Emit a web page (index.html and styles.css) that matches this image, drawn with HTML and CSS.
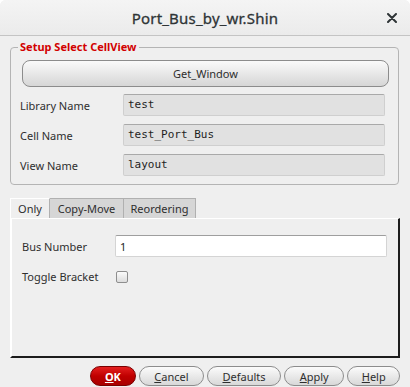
FILE: index.html
```html
<!DOCTYPE html>
<html lang="en">
<head>
  <meta charset="UTF-8" />
  <meta name="viewport" content="width=device-width, initial-scale=1.0" />
  <title>Port_Bus_by_wr.Shin</title>
  <link rel="stylesheet" href="styles.css">
</head>
<body>
  <div class="window">
    <header class="titlebar">
      <span class="title">Port_Bus_by_wr.Shin</span>
      <span class="close">
        <svg width="10" height="10" viewBox="0 0 10 10">
          <path d="M1 1 L9 9 M9 1 L1 9" stroke="#2e3436" stroke-width="2" stroke-linecap="round" />
        </svg>
      </span>
    </header>

    <div class="content">
      <fieldset class="group">
        <legend>Setup Select CellView</legend>
        <button class="wide-btn">Get_Window</button>
        <div class="form-grid">
          <label>Library Name</label>
          <div class="field">test</div>
          <label>Cell Name</label>
          <div class="field">test_Port_Bus</div>
          <label>View Name</label>
          <div class="field">layout</div>
        </div>
      </fieldset>

      <div class="tabs">
        <div class="tab active tab-only">Only</div>
        <div class="tab tab-copy">Copy-Move</div>
        <div class="tab tab-reorder">Reordering</div>
      </div>
      <div class="tab-panel">
        <div class="panel-row">
          <label>Bus Number</label>
          <input type="text" class="entry" value="1">
        </div>
        <div class="panel-row check-row">
          <label>Toggle Bracket</label>
          <span class="checkbox"></span>
        </div>
      </div>

      <div class="buttons">
        <button class="btn ok"><u>O</u>K</button>
        <button class="btn cancel"><u>C</u>ancel</button>
        <button class="btn defaults"><u>D</u>efaults</button>
        <button class="btn apply"><u>A</u>pply</button>
        <button class="btn help"><u>H</u>elp</button>
      </div>
    </div>
  </div>
</body>
</html>
```

FILE: styles.css
```css
html, body {
  margin: 0;
  padding: 0;
  background-color: #ffffff;
}

body {
  font-family: "Noto Sans", "Open Sans", sans-serif;
  font-size: 11px;
  color: #2e2e2e;
}

.window {
  width: 410px;
  height: 387px;
  background-color: #efefef;
  border-radius: 6px 6px 0 0;
  overflow: hidden;
}

.titlebar {
  height: 35px;
  border-bottom: 1px solid #c4c4c4;
  background: linear-gradient(#f4f4f4, #ebebeb);
  display: flex;
  align-items: center;
  justify-content: center;
  position: relative;
}

.title {
  font-size: 15px;
  color: #2e3436;
  letter-spacing: 0.2px;
  -webkit-text-stroke: 0.3px #2e3436;
}

.close {
  position: absolute;
  right: 13px;
  top: 13px;
  width: 10px;
  height: 10px;
  display: flex;
}

.content {
  padding: 0 10px 0 10px;
}

.group {
  margin: 4px 1px 0 0;
  padding: 6px 9px 8px 11px;
  border: 1px solid #b4b4b4;
  border-radius: 4px;
}

.group legend {
  color: #d20000;
  font-weight: bold;
  font-size: 11px;
  line-height: 14px;
  padding: 0 2px;
  margin-left: -4px;
}

.wide-btn {
  display: block;
  width: 367px;
  height: 27px;
  border: 1px solid #8c8c8c;
  border-radius: 8px;
  background: linear-gradient(#fafafa, #d6d6d6);
  font-family: inherit;
  font-size: 11px;
  color: #2e2e2e;
  padding: 0;
}

.form-grid {
  display: grid;
  grid-template-columns: 101px 262px;
  row-gap: 8px;
  margin-top: 7px;
  align-items: center;
}

.form-grid label {
  margin-left: -2px;
}

.field {
  height: 20px;
  background-color: #e1e1e1;
  border: 1px solid #cfcfcf;
  border-top-color: #a9a9a9;
  border-radius: 2px;
  font-family: "DejaVu Sans Mono", monospace;
  font-size: 11px;
  line-height: 20px;
  padding-left: 4px;
  color: #1e1e1e;
}

.tabs {
  display: flex;
  margin-top: 13px;
  height: 20px;
}

.tab {
  box-sizing: border-box;
  height: 20px;
  line-height: 19px;
  text-align: center;
  background-color: #d6d6d6;
  border-top: 1px solid #b0b0b0;
  border-right: 1px solid #b0b0b0;
}

.tab.active {
  background-color: #efefef;
  border-top: 1px solid #ffffff;
  border-left: 1px solid #ffffff;
  border-right: 1px solid #b0b0b0;
}

.tab-only { width: 40px; }
.tab-copy { width: 74px; }
.tab-reorder { width: 72px; }

.tab-panel {
  box-sizing: border-box;
  width: 390px;
  height: 140px;
  border-top: 1px solid #ffffff;
  border-left: 2px solid #ffffff;
  border-right: 2px solid #1c1c1c;
  border-bottom: 2px solid #1c1c1c;
  padding: 16px 0 0 10px;
}

.panel-row {
  display: flex;
  align-items: center;
}

.panel-row label {
  width: 93px;
}

.entry {
  box-sizing: border-box;
  width: 272px;
  height: 22px;
  border: 1px solid #d4d4d4;
  border-top-color: #9e9e9e;
  border-radius: 2px;
  background-color: #ffffff;
  font-family: inherit;
  font-size: 11px;
  padding: 0 0 0 4px;
  margin: 0;
  color: #1e1e1e;
}

.check-row {
  margin-top: 12px;
}

.checkbox {
  box-sizing: border-box;
  width: 12px;
  height: 12px;
  margin-left: 1px;
  border: 1px solid #8e8e8e;
  border-radius: 2px;
  background: linear-gradient(#fbfbfb, #dcdcdc);
}

.buttons {
  display: flex;
  gap: 3px;
  margin-top: 8px;
  padding-left: 80px;
}

.btn {
  height: 20px;
  border: 1px solid #8c8c8c;
  border-radius: 10px;
  background: linear-gradient(#fbfbfb, #d8d8d8);
  font-family: inherit;
  font-size: 11px;
  color: #2e2e2e;
  padding: 0;
  line-height: 17px;
}

.btn.ok {
  width: 47px;
  background: linear-gradient(#e42020, #c00000 50%, #a80000);
  border-color: #7a0000;
  color: #ffffff;
  font-weight: bold;
}

.btn.cancel { width: 67px; }
.btn.defaults { width: 76px; }
.btn.apply { width: 62px; }
.btn.help { width: 54px; }
```
